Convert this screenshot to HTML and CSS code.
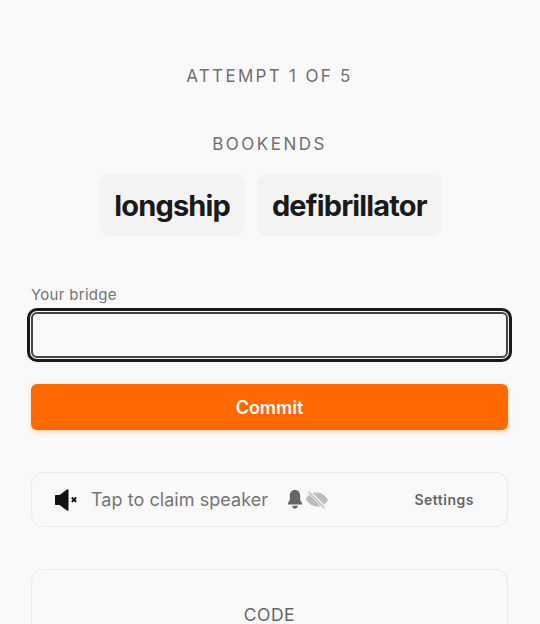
FILE: index.html
```html
<!DOCTYPE html>
<html lang="en">
<head>
    <meta charset="UTF-8">
    <meta name="viewport" content="width=device-width, initial-scale=1.0">
    <title>Bridge</title>
    <link rel="stylesheet" href="styles.css">
</head>
<body>
    <main class="page">
        <p class="attempt">ATTEMPT 1 OF 5</p>
        <section class="bookends">
            <h2 class="section-label">BOOKENDS</h2>
            <div class="words">
                <span class="word">longship</span>
                <span class="word">defibrillator</span>
            </div>
        </section>
        <form class="bridge-form">
            <label class="bridge-label" for="bridge">Your bridge</label>
            <input class="bridge-input" type="text" id="bridge" name="bridge">
            <button class="commit" type="button">Commit</button>
        </form>
        <section class="speaker-bar">
            <svg class="icon-speaker" viewBox="0 0 23 22" width="23" height="22" aria-hidden="true">
                <path d="M1 6h3.500L12 .4c.7-.5 1.500-.1 1.500.7v19.800c0 .8-.8 1.200-1.500.7L4.500 16H1c-.6 0-1-.4-1-1V7c0-.6.4-1 1-1z" fill="#111"/>
                <path d="M16.800 8.500l4.400 4.400M21.200 8.500l-4.400 4.400" stroke="#111" stroke-width="1.900" fill="none"/>
            </svg>
            <span class="claim">Tap to claim speaker</span>
            <svg class="icon-bell" viewBox="0 0 14 19" width="14" height="19" aria-hidden="true">
                <path d="M7 0c3.400 0 5.200 2.600 5.200 6v4l1.800 3v1.500H0V13l1.800-3V6C1.800 2.600 3.600 0 7 0z" fill="#666"/>
                <path d="M4.200 15.800h5.600c-.2 1.800-1.300 3-2.800 3s-2.600-1.200-2.800-3z" fill="#666"/>
            </svg>
            <svg class="icon-eye" viewBox="0 0 22 18" width="22" height="18" aria-hidden="true">
                <path d="M0 8c2-4 6-6.500 10.500-6.500S19.500 4 22 9c-2 4-6 6.500-10.500 6.500S2 13 0 8z" fill="#bdbdbd"/>
                <path d="M3 .8l16 16.400" stroke="#f9f9f9" stroke-width="3.400" fill="none"/>
                <path d="M2.500 .8l16 16.400" stroke="#bdbdbd" stroke-width="1.600" fill="none"/>
            </svg>
            <button class="settings" type="button">Settings</button>
        </section>
        <section class="code-card">
            <h2 class="code-label">CODE</h2>
        </section>
    </main>
</body>
</html>
```

FILE: styles.css
```css
html, body {
    height: 100%;
}
body {
    margin: 0;
    background-color: #f9f9f9;
    font-family: Inter, 'Liberation Sans', sans-serif;
    overflow: hidden;
}
.page {
    padding: 66px 32px 0 31px;
    display: flex;
    flex-direction: column;
}
.attempt {
    margin: 0;
    text-align: center;
    font-size: 17px;
    line-height: 20px;
    letter-spacing: 2.300px;
    color: #707070;
}
.bookends {
    margin-top: 48px;
}
.section-label {
    margin: 0;
    text-align: center;
    font-size: 17px;
    line-height: 20px;
    font-weight: 400;
    letter-spacing: 2.500px;
    color: #707070;
}
.words {
    display: flex;
    justify-content: center;
    gap: 12px;
    margin-top: 20px;
    padding-left: 2px;
}
.word {
    padding: 0 15px;
    height: 62px;
    line-height: 64px;
    background-color: #f3f3f3;
    border-radius: 10px;
    font-size: 29px;
    font-weight: 700;
    letter-spacing: -0.850px;
    color: #1a1a1a;
}
.bridge-form {
    display: flex;
    flex-direction: column;
    margin-top: 50px;
}
.bridge-label {
    font-size: 15px;
    line-height: 18px;
    letter-spacing: 0.300px;
    color: #737373;
}
.bridge-input {
    box-sizing: border-box;
    height: 46px;
    margin-top: 8px;
    border: 2px solid #444;
    border-radius: 6px;
    background-color: #f9f9f9;
    outline: 3px solid #1a1a1a;
    outline-offset: 1px;
}
.commit {
    height: 46px;
    margin-top: 26px;
    border: none;
    border-radius: 6px;
    background-color: #ff6900;
    box-shadow: 0 2px 4px rgba(255, 105, 0, 0.3);
    color: #ffffff;
    font-family: inherit;
    font-size: 18px;
    font-weight: 600;
}
.speaker-bar {
    display: flex;
    align-items: center;
    box-sizing: border-box;
    height: 55px;
    margin-top: 42px;
    padding: 0 33px 0 23px;
    border: 1.500px solid #ebebeb;
    border-radius: 12px;
}
.claim {
    margin-left: 13px;
    font-size: 18px;
    letter-spacing: 0.050px;
    color: #757575;
}
.icon-bell {
    margin-left: 20px;
}
.icon-eye {
    margin-left: 4px;
}
.settings {
    margin-left: auto;
    padding: 0;
    border: none;
    background: none;
    font-family: inherit;
    font-size: 14px;
    font-weight: 600;
    letter-spacing: 0.500px;
    color: #666;
}
.code-card {
    box-sizing: border-box;
    height: 120px;
    margin-top: 42px;
    padding-top: 35px;
    border: 1.500px solid #ebebeb;
    border-radius: 12px;
}
.code-label {
    margin: 0;
    text-align: center;
    font-size: 17.500px;
    line-height: 20px;
    font-weight: 400;
    letter-spacing: 0.500px;
    color: #666;
}
```
